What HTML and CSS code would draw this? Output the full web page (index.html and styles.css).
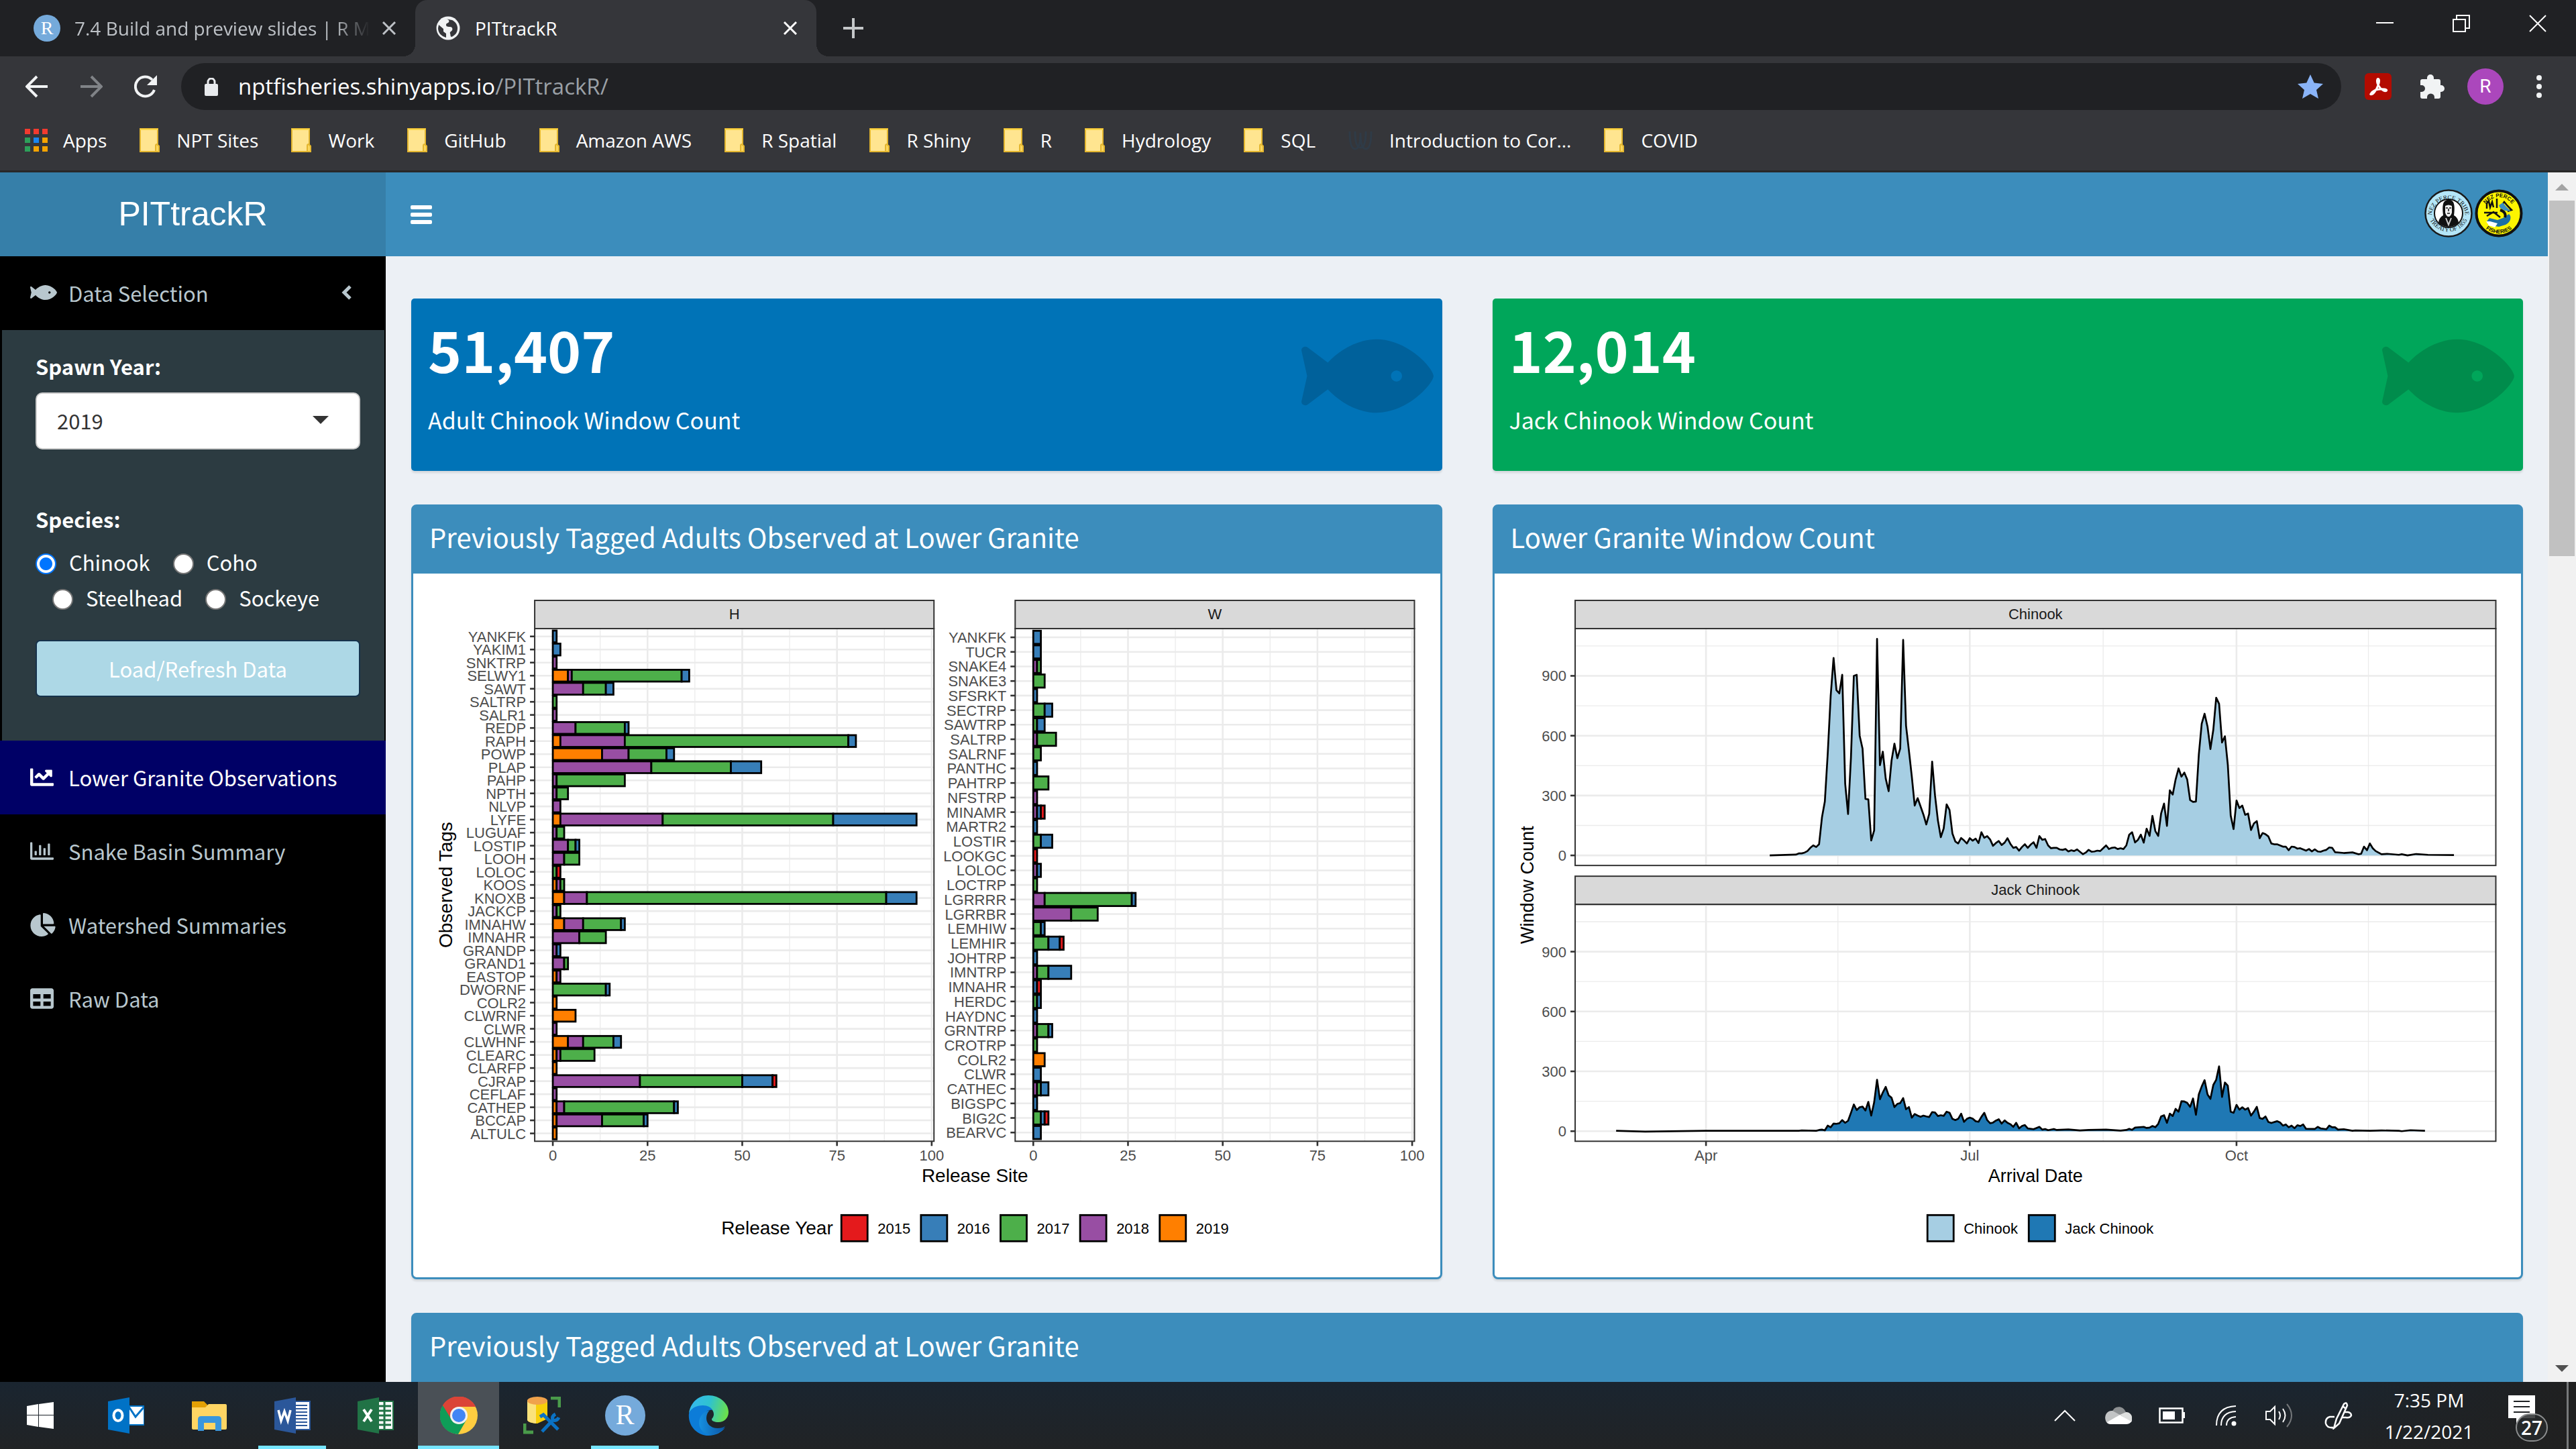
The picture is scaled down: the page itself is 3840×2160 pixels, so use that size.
FILE: index.html
```html
<!DOCTYPE html>
<html lang="en">
<head>
<meta charset="utf-8">
<title>PITtrackR</title>
<link rel="stylesheet" href="styles.css">
</head>
<body>
<svg class="defs" aria-hidden="true">
  <symbol id="i-fish" viewBox="0 0 576 512"><path d="M327.1 96c-89.97 0-168.54 54.77-212.27 101.63L27.5 131.58c-12.13-9.18-30.24.6-27.14 14.66L24.54 256 .35 365.77c-3.1 14.06 15.01 23.83 27.14 14.66l87.33-66.05C158.55 361.23 237.13 416 327.1 416 464.56 416 576 288 576 256S464.56 96 327.1 96zm87.43 184c-13.25 0-24-10.75-24-24 0-13.26 10.75-24 24-24 13.26 0 24 10.74 24 24 0 13.25-10.75 24-24 24z"/></symbol>
  <symbol id="i-folder" viewBox="0 0 30 36"><path d="M1 1h26v24l2 2v8H1z" fill="#ffe590" stroke="#e3b62f" stroke-width="2"/><path d="M1 2h26" stroke="#ffd84c" stroke-width="2"/><path d="M24 35V26q0-2 2-2l3 3v8z" fill="#fbd75e" stroke="#e3b62f" stroke-width="2"/></symbol>
  <symbol id="i-x" viewBox="0 0 20 20"><path d="M1 1l18 18M19 1L1 19" fill="none" stroke="currentColor" stroke-width="3"/></symbol>
</svg>

<header class="browser">
  <div class="tabstrip">
    <div class="tab">
      <span class="rmark fav">R</span>
      <span class="tab-title faded">7.4 Build and preview slides | R M</span>
      <button class="tab-close" aria-label="Close tab"><svg><use href="#i-x"/></svg></button>
    </div>
    <div class="tab active">
      <svg class="globe" viewBox="0 0 36 36"><circle cx="18" cy="18" r="17.500" fill="#f1f3f4"/><path d="M4 13l7 6v4l4 3v6C8 30 3 25 3 18zM16 5c3 0 4 2 3 4s-4 1-4 4 3 3 6 3 4 3 3 5-4 2-3 5 0 4 2 5c5-2 9-6 9-13 0-6-4-10-8-12-2 0-5-2-8-1z" fill="#35363a"/></svg>
      <span class="tab-title">PITtrackR</span>
      <button class="tab-close" aria-label="Close tab"><svg><use href="#i-x"/></svg></button>
    </div>
    <button class="new-tab" aria-label="New tab"><svg viewBox="0 0 30 30"><path d="M15 0v30M0 15h30" stroke="#c4c7c9" stroke-width="4"/></svg></button>
    <div class="win-controls">
      <button aria-label="Minimize"><svg viewBox="0 0 26 26"><path d="M0 12h26" stroke="#fff" stroke-width="2"/></svg></button>
      <button aria-label="Restore"><svg viewBox="0 0 26 26"><path d="M1 7h18v18H1zM6 7V1h19v19h-6" fill="none" stroke="#fff" stroke-width="2"/></svg></button>
      <button aria-label="Close"><svg viewBox="0 0 26 26"><path d="M1 1l24 24M25 1L1 25" stroke="#fff" stroke-width="2"/></svg></button>
    </div>
  </div>
  <div class="toolbar">
    <button aria-label="Back"><svg class="nav" viewBox="0 0 34 34"><path d="M33 17H3M17 2L2 17l15 15" fill="none" stroke="#f1f3f4" stroke-width="4"/></svg></button>
    <button aria-label="Forward"><svg class="nav" viewBox="0 0 34 34"><path d="M1 17h30M17 2l15 15-15 15" fill="none" stroke="#808387" stroke-width="4"/></svg></button>
    <button aria-label="Reload"><svg class="nav" viewBox="0 0 34 34"><path d="M30 22A14.500 14.500 0 1 1 27 7" fill="none" stroke="#f1f3f4" stroke-width="4"/><path d="M34 0v15H19z" fill="#f1f3f4"/></svg></button>
    <div class="omnibox">
      <svg class="lock" viewBox="0 0 20 27"><rect y="9" width="20" height="18" rx="2" fill="#e8eaed"/><path d="M5 10V6a5 5 0 0 1 10 0v4" fill="none" stroke="#e8eaed" stroke-width="3"/></svg>
      <div class="url" role="textbox" aria-label="Address" contenteditable="true" spellcheck="false">nptfisheries.shinyapps.io<span>/PITtrackR/</span></div>
      <button class="star" aria-label="Bookmark this page"><svg viewBox="0 0 38 36"><path d="M19 0l5.700 12.500L38 14l-10 9 3 13-12-7-12 7 3-13L0 14l13.300-1.500z" fill="#8ab4f8"/></svg></button>
    </div>
    <div class="extensions">
      <button aria-label="Acrobat"><svg width="40" height="40" viewBox="0 0 40 40"><rect width="40" height="40" rx="6" fill="#b30b00"/><path d="M9 31c3-5 10-8 21-7 5 1 2 4-2 2-7-4-11-12-9-17 2-2 4 2 1 9-2 5-5 11-8 13-2 1-4 1-3 0z" fill="none" stroke="#fff" stroke-width="3"/></svg></button>
      <button aria-label="Extensions"><svg width="37" height="37" viewBox="0 0 37 37"><path d="M11 7V5a5 5 0 0 1 10 0v2h7q3 0 3 3v6h1a5 5 0 0 1 0 10h-1v7q0 3-3 3h-6v-2a5 5 0 0 0-11 0v2H4q-3 0-3-3v-7h2a5 5 0 0 0 0-10H1v-6q0-3 3-3z" fill="#f1f3f4"/></svg></button>
      <button aria-label="Profile"><span class="avatar">R</span></button>
      <button aria-label="Menu"><svg width="8" height="34" viewBox="0 0 8 34"><circle cx="4" cy="4" r="4" fill="#f1f3f4"/><circle cx="4" cy="17" r="4" fill="#f1f3f4"/><circle cx="4" cy="30" r="4" fill="#f1f3f4"/></svg></button>
    </div>
  </div>
  <nav class="bookmarks">
    <a href="#" class="apps"><svg width="34" height="34" viewBox="0 0 34 34"><path d="M0 0h8v8H0zM13 0h8v8h-8zM26 0h8v8h-8z" fill="#f23a2f"/><path d="M0 13h8v8H0zM0 26h8v8H0z" fill="#2da05a"/><path d="M13 13h8v8h-8z" fill="#1a86f0"/><path d="M26 13h8v8h-8zM13 26h8v8h-8zM26 26h8v8h-8z" fill="#f5a300"/></svg>Apps</a>
    <a href="#"><svg class="folder"><use href="#i-folder"/></svg>NPT Sites</a>
    <a href="#"><svg class="folder"><use href="#i-folder"/></svg>Work</a>
    <a href="#"><svg class="folder"><use href="#i-folder"/></svg>GitHub</a>
    <a href="#"><svg class="folder"><use href="#i-folder"/></svg>Amazon AWS</a>
    <a href="#"><svg class="folder"><use href="#i-folder"/></svg>R Spatial</a>
    <a href="#"><svg class="folder"><use href="#i-folder"/></svg>R Shiny</a>
    <a href="#"><svg class="folder"><use href="#i-folder"/></svg>R</a>
    <a href="#"><svg class="folder"><use href="#i-folder"/></svg>Hydrology</a>
    <a href="#"><svg class="folder"><use href="#i-folder"/></svg>SQL</a>
    <a href="#"><svg width="36" height="30" viewBox="0 0 36 30"><path d="M2 2q0 26 8 26t8-24q0 24 8 24t8-26M10 2q0 24 8 24t8-24" fill="none" stroke="#2f3b47" stroke-width="3"/></svg>Introduction to Cor...</a>
    <a href="#"><svg class="folder"><use href="#i-folder"/></svg>COVID</a>
  </nav>
</header>

<div class="viewport">
  <aside class="sidebar">
    <a class="brand" href="#">PITtrackR</a>
    <a class="item" href="#"><span class="ico"><svg width="40" height="36"><use href="#i-fish"/></svg></span>Data Selection
      <svg class="angle" viewBox="0 0 16 22"><path d="M13 2L4 11l9 9" fill="none" stroke="currentColor" stroke-width="5"/></svg></a>
    <form class="filters" onsubmit="return false">
      <label class="field" for="year">Spawn Year:</label>
      <div class="select"><select id="year"><option>2019</option></select></div>
      <fieldset>
        <legend class="field">Species:</legend>
        <div class="radios">
          <label><input type="radio" name="species" checked>Chinook</label>
          <label><input type="radio" name="species">Coho</label>
        </div>
        <div class="radios indent">
          <label><input type="radio" name="species">Steelhead</label>
          <label><input type="radio" name="species">Sockeye</label>
        </div>
      </fieldset>
      <button class="load">Load/Refresh Data</button>
    </form>
    <nav>
      <a class="item current" href="#"><span class="ico"><svg width="35" height="35" viewBox="0 0 512 512"><path d="M496 384H64V80c0-8.840-7.160-16-16-16H16C7.160 64 0 71.160 0 80v336c0 17.670 14.330 32 32 32h464c8.840 0 16-7.160 16-16v-32c0-8.840-7.160-16-16-16zM464 96H345.940c-21.380 0-32.090 25.850-16.970 40.970l32.400 32.400L288 242.750l-73.370-73.370c-12.500-12.500-32.760-12.500-45.250 0l-68.690 68.690c-6.250 6.250-6.250 16.380 0 22.630l22.620 22.620c6.250 6.250 16.380 6.250 22.630 0L192 237.250l73.370 73.370c12.500 12.500 32.760 12.500 45.250 0l96-96 32.400 32.400c15.120 15.120 40.970 4.410 40.970-16.970V112c.01-8.840-7.150-16-15.990-16z"/></svg></span>Lower Granite Observations</a>
      <a class="item" href="#"><span class="ico"><svg width="35" height="35" viewBox="0 0 512 512"><path d="M396.800 352h22.400c6.400 0 12.800-6.400 12.800-12.800V108.800c0-6.400-6.400-12.800-12.800-12.800h-22.400c-6.400 0-12.800 6.400-12.800 12.800v230.400c0 6.400 6.400 12.800 12.800 12.800zm-192 0h22.400c6.400 0 12.800-6.400 12.800-12.800V140.800c0-6.400-6.400-12.800-12.800-12.800h-22.400c-6.400 0-12.800 6.400-12.800 12.800v198.400c0 6.400 6.400 12.800 12.800 12.800zm96 0h22.400c6.400 0 12.800-6.400 12.800-12.800V204.800c0-6.400-6.400-12.800-12.800-12.800h-22.400c-6.400 0-12.800 6.400-12.800 12.800v134.400c0 6.400 6.400 12.800 12.800 12.800zM496 400H48V80c0-8.840-7.160-16-16-16H16C7.160 64 0 71.160 0 80v336c0 17.670 14.330 32 32 32h464c8.840 0 16-7.160 16-16v-16c0-8.840-7.160-16-16-16zm-387.200-48h22.400c6.400 0 12.800-6.400 12.800-12.800v-70.400c0-6.400-6.400-12.800-12.800-12.800h-22.400c-6.400 0-12.800 6.400-12.800 12.800v70.400c0 6.400 6.400 12.800 12.800 12.800z"/></svg></span>Snake Basin Summary</a>
      <a class="item" href="#"><span class="ico"><svg width="38" height="35" viewBox="0 0 544 512"><path d="M527.790 288H290.500l158.030 158.030c6.040 6.040 15.980 6.530 22.190.68 38.700-36.460 65.320-85.610 73.130-140.860 1.340-9.460-6.510-17.850-16.060-17.850zm-15.830-64.800C503.720 103.740 408.260 8.280 288.800.04 279.680-.59 272 7.100 272 16.240V240h223.770c9.140 0 16.820-7.680 16.190-16.800zM224 288V50.710c0-9.550-8.390-17.400-17.840-16.060C86.990 51.490-4.100 155.600.14 280.370 4.500 408.510 114.830 513.590 243.030 511.980c50.400-.63 96.970-16.870 135.260-44.030 7.900-5.600 8.420-17.230 1.570-24.080L224 288z"/></svg></span>Watershed Summaries</a>
      <a class="item" href="#"><span class="ico"><svg width="35" height="35" viewBox="0 0 512 512"><path d="M464 32H48C21.490 32 0 53.490 0 80v352c0 26.510 21.490 48 48 48h416c26.510 0 48-21.490 48-48V80c0-26.510-21.490-48-48-48zM224 416H64v-96h160v96zm0-160H64v-96h160v96zm224 160H288v-96h160v96zm0-160H288v-96h160v96z"/></svg></span>Raw Data</a>
    </nav>
  </aside>

  <div class="page">
    <div class="navbar">
      <button class="burger" aria-label="Toggle navigation"><span></span><span></span><span></span></button>
      <div class="logos">
        <svg width="74" height="76" viewBox="0 0 74 76">
          <circle cx="37" cy="36" r="34.500" fill="#b4e6f8" stroke="#1a1a1a" stroke-width="2.500"/>
          <circle cx="37" cy="36" r="21" fill="#fff" stroke="#111" stroke-width="2"/>
          <path d="M22 50c1-7 4-9 7-11-1-8-1-13 0-17 2-8 14-9 16 0 1 4 1 9 0 17 3 2 6 4 7 11-4 4-9 6-15 6s-11-2-15-6z" fill="#111"/>
          <path d="M32 25q5-3 10 0v10q-2 6-5 6t-5-6z" fill="#f0f0f0"/><path d="M33 28h3m2 0h3m-6 8h4M37 29v4" stroke="#111" stroke-width="1.500"/><path d="M33 43l4 10 4-10" fill="none" stroke="#ccc" stroke-width="2"/>
          <path id="arc1" d="M12 40A25 25 0 1 1 62 40" fill="none"/><path id="arc2" d="M7 40A31 31 0 0 0 67 40" fill="none"/>
          <text font-family="Liberation Serif, serif" font-size="9" fill="#111"><textPath href="#arc1" startOffset="50%" text-anchor="middle">NEZ PERCE TRIBE</textPath></text>
          <text font-family="Liberation Serif, serif" font-size="9" fill="#111"><textPath href="#arc2" startOffset="50%" text-anchor="middle">TREATY OF 1855</textPath></text>
        </svg>
        <svg width="72" height="76" viewBox="0 0 72 76">
          <circle cx="36" cy="36" r="33.500" fill="#fdf500" stroke="#111" stroke-width="4"/>
          <path id="arc3" d="M12 36A24 24 0 0 1 60 36" fill="none"/><path id="arc4" d="M6 36A30 30 0 0 0 66 36" fill="none"/>
          <text font-family="Liberation Sans, sans-serif" font-weight="700" font-size="8" fill="#111"><textPath href="#arc3" startOffset="50%" text-anchor="middle">NEZ PERCE</textPath></text>
          <text font-family="Liberation Sans, sans-serif" font-weight="700" font-size="8" fill="#111"><textPath href="#arc4" startOffset="50%" text-anchor="middle">FISHERIES</textPath></text>
          <path d="M33 14v14M38 27l6-8 5 6 6 6-6 2M18 29v-8l3-3 2 9 3-8 2 8M14 35h20M18 40l10-6 10 8" fill="none" stroke="#111" stroke-width="2.500"/>
          <path d="M36 24l6-4 4 5 8 8-9-1-7-4z" fill="#3b8fc0"/><path d="M18 48l4-5 12 3 8-3 9-6c5 4 2 13-5 16l-10 3-12-2z" fill="#1c6fa5"/><path d="M17 48l6 0 11 3-4 6-9-3z" fill="#fff"/><path d="M38 31c6 2 9 6 7 11" fill="none" stroke="#111" stroke-width="4"/>
        </svg>
      </div>
    </div>
    <main class="content">
      <section class="value blue"><h3>51,407</h3><p>Adult Chinook Window Count</p><svg class="fish"><use href="#i-fish"/></svg></section>
      <section class="value green"><h3>12,014</h3><p>Jack Chinook Window Count</p><svg class="fish"><use href="#i-fish"/></svg></section>
      <section class="box"><h2>Previously Tagged Adults Observed at Lower Granite</h2><svg class="plot" id="tags" viewBox="0 0 1530 1049" role="img" aria-label="Observed tags by release site"></svg></section>
      <section class="box"><h2>Lower Granite Window Count</h2><svg class="plot" id="window" viewBox="0 0 1530 1049" role="img" aria-label="Window count by arrival date"></svg></section>
      <section class="box wide"><h2>Previously Tagged Adults Observed at Lower Granite</h2></section>
    </main>
  </div>
  <div class="scrollbar" aria-hidden="true"><i class="up"></i><b></b><i class="down"></i></div>
</div>

<footer class="taskbar">
  <button class="start" aria-label="Start"><svg width="40" height="40" viewBox="0 0 40 40"><path d="M0 6l17-3v16H0zM18 3l22-3v19H18zM0 20h17v17L0 34zM18 20h22v20l-22-3z" fill="#fff"/></svg></button>
  <button aria-label="Outlook"><svg width="54" height="54" viewBox="0 0 54 54"><path d="M30 13h24v28H30z" fill="#fff" stroke="#0072c6" stroke-width="2"/><path d="M31 14l10 15 13-15" fill="none" stroke="#0072c6" stroke-width="3"/><path d="M0 6l32-6v54L0 48z" fill="#0072c6"/><ellipse cx="15" cy="27" rx="6.500" ry="8" fill="none" stroke="#fff" stroke-width="4"/></svg></button>
  <button aria-label="File Explorer"><svg width="54" height="46" viewBox="0 0 54 46"><path d="M1 2h18l6 6h28v9H1z" fill="#e3a005"/><path d="M1 11h20l5-5h25q2 0 2 2v34q0 2-2 2H3q-2 0-2-2z" fill="#ffd563"/><path d="M10 46V29q0-5 5-5h25q5 0 5 5v17h-9V34H19v12z" fill="#3a96dd"/></svg></button>
  <button class="open" aria-label="Word"><svg width="54" height="54" viewBox="0 0 54 54"><path d="M30 6h23v42H30z" fill="#fff" stroke="#2b579a" stroke-width="2"/><path d="M32 12h17M32 17h17M32 22h17M32 27h17M32 32h17M32 37h17M32 42h17" stroke="#2b579a" stroke-width="2"/><path d="M0 6l32-6v54L0 48z" fill="#2b579a"/><path d="M6 19l4 16 5-14 5 14 4-16" fill="none" stroke="#fff" stroke-width="3.500"/></svg></button>
  <button aria-label="Excel"><svg width="54" height="54" viewBox="0 0 54 54"><path d="M30 6h23v42H30z" fill="#fff" stroke="#217346" stroke-width="2"/><path d="M40 7v40M32 13h18M32 20h18M32 27h18M32 34h18M32 41h18" stroke="#217346" stroke-width="3"/><path d="M0 6l32-6v54L0 48z" fill="#217346"/><path d="M9 18l12 18M21 18L9 36" fill="none" stroke="#fff" stroke-width="4"/></svg></button>
  <button class="open focused" aria-label="Chrome"><svg width="56" height="56" viewBox="0 0 56 56"><circle cx="28" cy="28" r="28" fill="#ffcd40"/><path d="M28 28L4 13A28 28 0 0 1 53 15H28z" fill="#db4437"/><path d="M4 13A28 28 0 0 0 27 56L39 35 28 28z" fill="#0f9d58"/><path d="M4 13l13 21 11-6V15h25A28 28 0 0 0 4 13z" fill="#db4437"/><circle cx="28" cy="28" r="13" fill="#f1f1f1"/><circle cx="28" cy="28" r="10" fill="#4285f4"/></svg></button>
  <button aria-label="SSMS"><svg width="56" height="56" viewBox="0 0 56 56"><path d="M6 5v30a15 6 0 0 0 15 5l15-7V5z" fill="#f8cf0a"/><path d="M6 5v30a15 6 0 0 0 13 5V5z" fill="#fbe27a"/><ellipse cx="21" cy="6" rx="15" ry="6" fill="#f0a24b"/><path d="M41 2h13v14M2 40v13h13" fill="none" stroke="#4a9b4a" stroke-width="5"/><path d="M25 30l5-3 22 22M28 52l16-17q-2-6 4-9M44 35q6 2 9-4" fill="none" stroke="#0a72c4" stroke-width="5"/></svg></button>
  <button class="open" aria-label="RStudio"><span class="rmark large">R</span></button>
  <button aria-label="Edge"><svg width="60" height="60" viewBox="0 0 60 60"><defs><linearGradient id="eg" x1="0" x2="1" y1=".3" y2=".5"><stop offset="0" stop-color="#35b8f0"/><stop offset=".5" stop-color="#2fc2cf"/><stop offset="1" stop-color="#6be04a"/></linearGradient><linearGradient id="eb" x1="0" x2="1"><stop offset="0" stop-color="#1690e0"/><stop offset="1" stop-color="#0c55a5"/></linearGradient></defs><path d="M1 27C3 11 15 0 30 0c17 0 30 12 30 25 0 9-7 15-15 15-6 0-10-2-10-4s3-3 3-8c0-7-7-12-15-12C12 16 4 20 1 27z" fill="url(#eg)"/><path d="M1 27c3-8 11-12 21-12 7 0 12 3 14 7-8-2-14 5-14 13 0 11 10 18 20 18 6 0 10-2 13-5-5 7-14 12-25 12C13 60-1 45 1 27z" fill="#0c7cd8"/><path d="M32 22c-7 1-16 8-16 19 0 10 8 18 19 18 8-1 16-6 20-13-3 2-6 3-11 3-12 0-17-8-17-15 0-5 2-9 5-12z" fill="url(#eb)"/></svg></button>
  <div class="tray">
    <button aria-label="Hidden icons"><svg width="32" height="18" viewBox="0 0 32 18"><path d="M1 17L16 2l15 15" fill="none" stroke="#fff" stroke-width="2"/></svg></button>
    <button aria-label="OneDrive"><svg width="40" height="28" viewBox="0 0 40 28"><path d="M10 10C12 0 26-3 31 9L20 16z" fill="#8e9193"/><path d="M2 24C-3 15 3 6 11 7l11 6L4 26z" fill="#c2c4c5"/><path d="M22 13l9-4c7-1 12 8 8 15z" fill="#dedfdf"/><path d="M3 24l19-11 17 10q-2 4-8 4H8q-4 0-5-3z" fill="#fff"/></svg></button>
    <button aria-label="Battery"><svg width="40" height="24" viewBox="0 0 40 24"><path d="M1.500 1.500h34v21h-34z" fill="none" stroke="#fff" stroke-width="2.500"/><path d="M6 6h18v12H6zM36 7h3v9h-3z" fill="#fff"/></svg></button>
    <button aria-label="Network"><svg width="32" height="32" viewBox="0 0 32 32"><path d="M2 31Q2 3 31 2M9 31Q9 11 31 10M17 31q0-12 14-13" fill="none" stroke="#fff" stroke-width="2"/><circle cx="28" cy="28" r="3.500" fill="#fff"/></svg></button>
    <button aria-label="Volume"><svg width="42" height="38" viewBox="0 0 42 38"><path d="M1 13h6l7-7v26l-7-7H1z" fill="none" stroke="#fff" stroke-width="2"/><path d="M20 13q4 6 0 12M26 9q7 10 0 20" fill="none" stroke="#fff" stroke-width="2"/><path d="M32 2q14 17 0 34" fill="none" stroke="#74777a" stroke-width="2"/></svg></button>
    <button class="ink" aria-label="Ink workspace"><svg width="42" height="42" viewBox="0 0 42 42"><path d="M14 40l4-14L29 4q4-4 5 2L22 33zM27 7l5 4M15 23H8q-7 2-6 10 2 7 11 6M30 16h5q5 1 5 5-2 4-8 3h-6" fill="none" stroke="#fff" stroke-width="2.500"/></svg></button>
    <div class="clock"><time>7:35 PM</time><time>1/22/2021</time></div>
    <button class="notify" aria-label="Notifications"><svg width="64" height="60" viewBox="0 0 64 60"><path d="M0 0h40v34H20l-8 8v-8H0z" fill="#fff"/><path d="M8 9h24M8 17h24M8 25h24" stroke="#1f2224" stroke-width="2"/></svg><span>27</span></button>
    <button class="desktop" aria-label="Show desktop"></button>
  </div>
</footer>
<script src="charts.js"></script>
</body>
</html>
```
FILE: styles.css
```css
* { box-sizing: border-box; }
html, body { height: 100%; }
body {
  margin: 0;
  display: flex;
  flex-direction: column;
  overflow: hidden;
  font-family: "Noto Sans CJK JP", "Source Sans Pro", sans-serif;
  font-size: 31px;
  color: #fff;
  background: #ecf0f5;
}
button {
  margin: 0; padding: 0; border: 0;
  background: none; color: inherit; font: inherit;
  display: flex; align-items: center; justify-content: center;
}
a { color: inherit; text-decoration: none; }
h2, h3, p, fieldset, legend { margin: 0; padding: 0; border: 0; font-weight: 400; }
svg { display: block; flex: none; }
.defs { position: absolute; width: 0; height: 0; }

/* browser frame */
.browser {
  flex: none;
  background: #35363a;
  border-bottom: 3px solid #282828;
  font-family: "Open Sans", "Segoe UI", sans-serif;
  font-size: 28px;
}
.tabstrip { display: flex; height: 84px; background: #202124; }
.tab { display: flex; align-items: center; width: 619px; padding: 0 29px 0 50px; color: #bdc1c6; }
.tab.active {
  width: 598px; padding-left: 31px;
  background: #35363a; color: #fff;
  border-radius: 18px 18px 0 0;
  position: relative;
}
.tab.active::before, .tab.active::after {
  content: ""; position: absolute; bottom: 0; width: 18px; height: 18px;
}
.tab.active::before { left: -18px; background: radial-gradient(circle at 0 0, transparent 18px, #35363a 18px); }
.tab.active::after { right: -18px; background: radial-gradient(circle at 100% 0, transparent 18px, #35363a 18px); }
.rmark {
  flex: none; border-radius: 50%; background: #75aadb; color: #fff; text-align: center;
  font-family: "Liberation Serif", "Times New Roman", serif;
}
.rmark.fav { width: 40px; height: 40px; margin-right: 21px; font-size: 28px; line-height: 40px; }
.rmark.large { width: 60px; height: 60px; font-size: 42px; line-height: 58px; }
.globe { width: 36px; height: 36px; margin-right: 22px; }
.tab-title { flex: 1; white-space: nowrap; overflow: hidden; line-height: 40px; }
.faded { mask-image: linear-gradient(90deg, #000 88%, transparent); margin-right: 19px; }
.tab-close svg { width: 20px; height: 20px; }
.new-tab { width: 110px; }
.new-tab svg { width: 30px; height: 30px; }
.win-controls { display: flex; margin-left: auto; }
.win-controls button { width: 114px; height: 70px; }
.win-controls svg { width: 26px; height: 26px; }
.toolbar { display: flex; align-items: center; height: 90px; padding: 0 15px 0 14px; }
.toolbar > button { width: 81px; height: 70px; }
.nav { width: 34px; height: 34px; }
.omnibox {
  flex: 1; height: 70px; margin: 0 15px 0 13px; padding: 0 27px 0 35px;
  display: flex; align-items: center;
  background: #202124; border-radius: 35px;
}
.lock { width: 20px; height: 27px; margin-right: 30px; }
.url { flex: 1; font-size: 33px; line-height: 50px; outline: 0; }
.url span { color: #9aa0a6; }
.star svg { width: 38px; height: 36px; }
.extensions { display: flex; }
.extensions button { width: 80px; height: 70px; }
.avatar {
  width: 54px; height: 54px; line-height: 54px; border-radius: 50%;
  background: #ab47bc; font-family: Roboto, sans-serif; text-align: center;
}
.bookmarks { display: flex; align-items: center; gap: 49px; height: 80px; padding: 0 37px 11px; }
.bookmarks a { display: flex; align-items: center; gap: 25px; white-space: nowrap; }
.bookmarks .apps { gap: 23px; }
.folder { width: 30px; height: 36px; }

/* dashboard */
.viewport { flex: 1; min-height: 0; display: flex; }
.sidebar { width: 575px; flex: none; background: #000; overflow: hidden; }
.brand {
  display: block; height: 125px; background: #367fa9;
  font: 50px/125px "Liberation Sans", Arial, sans-serif; text-align: center;
}
.item { display: flex; align-items: center; height: 110px; padding: 0 50px 2px 45px; color: #b8c7ce; white-space: nowrap; }
.item svg { fill: currentColor; }
.ico { width: 57px; flex: none; }
.angle { width: 16px; height: 22px; margin-left: auto; }
.item .angle { fill: none; }
.item.current { background: #000066; color: #fff; }
.filters { margin: 0 2px 0 3px; padding: 29px 36px 65px 50px; background: #2c3b41; }
.field { display: block; font-weight: 700; line-height: 50px; }
.select { position: relative; margin: 14px 0 79px; }
.select select {
  appearance: none; display: block; width: 100%; height: 85px; padding: 0 30px 2px;
  border: 2px solid #ccc; border-radius: 10px; background: #fff; color: #333; font: inherit;
}
.select::after {
  content: ""; position: absolute; right: 47px; top: 35px;
  border: 12px solid transparent; border-top-color: #333; border-bottom: 0;
}
.radios { display: flex; gap: 34px; height: 53px; }
.field + .radios { margin-top: 12px; }
.radios.indent { padding-left: 25px; }
.radios label { display: flex; align-items: center; gap: 19px; line-height: 53px; }
.radios input {
  appearance: none; width: 31px; height: 31px; margin: 5px 0 0; flex: none;
  border-radius: 50%; border: 2px solid #767676; background: #fff;
}
.radios input:checked { border: 2px solid #0075ff; background: radial-gradient(circle, #0075ff 9px, #fff 10px); }
.load {
  width: 100%; height: 85px; margin-top: 37px;
  background: #add8e6; border: 2px solid #16324c; border-radius: 7px;
}
.page { flex: 1; min-width: 0; overflow: hidden; }
.navbar { display: flex; align-items: center; justify-content: space-between; height: 125px; padding: 0 37px; background: #3c8dbc; }
.burger { flex-direction: column; gap: 5px; }
.burger span { width: 32px; height: 6px; border-radius: 2px; background: #fff; }
.logos { display: flex; gap: 2px; }
.content { display: grid; grid-template-columns: 1fr 1fr; column-gap: 75px; row-gap: 50px; padding: 63px 37px 0 38px; }
.value {
  position: relative; padding: 22px 25px 51px; border-radius: 5px;
  box-shadow: 0 3px 3px rgba(0, 0, 0, .1);
}
.blue { background: #0073b7; }
.green { background: #00a65a; }
.value h3 { font-size: 85px; font-weight: 700; line-height: 104px; margin-bottom: 30px; }
.value p { font-size: 34px; line-height: 50px; }
.fish { position: absolute; right: 13px; top: 28px; width: 197px; height: 175px; opacity: .15; fill: #000; }
.box {
  background: #fff; border: 3px solid #3c8dbc; border-radius: 8px;
  box-shadow: 0 3px 3px rgba(0, 0, 0, .1);
}
.box.wide { grid-column: 1 / -1; height: 600px; }
.box h2 { padding: 15px 24px 25px; background: #3c8dbc; font-size: 40px; line-height: 60px; }
.plot { width: 100%; height: auto; font-family: "Liberation Sans", Arial, sans-serif; }
.scrollbar { width: 42px; flex: none; display: flex; flex-direction: column; align-items: center; background: #f1f1f1; }
.scrollbar b { width: 38px; height: 530px; background: #c1c1c1; }
.scrollbar i { border: 10px solid transparent; }
.scrollbar .up { margin-bottom: 15px; margin-top: 7px; border-bottom-color: #a3a3a3; }
.scrollbar .down { margin-top: auto; margin-bottom: 5px; border-top-color: #505050; }

/* taskbar */
.taskbar {
  flex: none; display: flex; gap: 3px; height: 100px;
  background: linear-gradient(90deg, rgba(32, 32, 32, 0) 90%, #202020), linear-gradient(#1a2530, #212325);
  font-family: "Open Sans", "Segoe UI", sans-serif; font-size: 28px;
}
.taskbar > button { width: 121px; }
.taskbar .start { width: 120px; margin-right: 4px; }
.open { background: linear-gradient(#76e5ff, #76e5ff) center bottom / 101px 5px no-repeat; }
.focused { background-size: 121px 5px; background-color: #4a5056; }
.tray { display: flex; margin-left: auto; }
.tray button { width: 80px; }
.tray .ink { margin-left: 8px; }
.tray .clock {
  width: 190px; padding-top: 2px; display: flex; flex-direction: column; justify-content: center;
  text-align: center; line-height: 47px;
}
.tray .notify { width: 110px; position: relative; }
.notify span {
  position: absolute; left: 34px; top: 47px; width: 48px; height: 42px; line-height: 38px;
  border: 2px solid #8b8d8e; border-radius: 21px; background: rgba(40, 42, 44, .85); font-weight: 600;
}
.tray .desktop { width: 14px; border-left: 3px solid #77797a; }
```
FILE: charts.js
```js
const NS = 'http://www.w3.org/2000/svg';
const INK = '#333', GREY = '#4d4d4d', GRID = '#ebebeb';

function painter(svg) {
  const add = (tag, attrs, text) => {
    const el = document.createElementNS(NS, tag);
    for (const k in attrs) el.setAttribute(k, attrs[k]);
    if (text !== undefined) el.textContent = text;
    svg.appendChild(el);
    return el;
  };
  return {
    rect: (x, y, w, h, fill, stroke, sw) => add('rect', { x, y, width: w, height: h, fill, stroke: stroke || 'none', 'stroke-width': sw || 0 }),
    line: (x1, y1, x2, y2, stroke, sw) => add('line', { x1, y1, x2, y2, stroke, 'stroke-width': sw }),
    text: (x, y, s, size, fill, anchor, extra) => add('text', Object.assign({ x, y, 'font-size': size, fill, 'text-anchor': anchor }, extra), s),
    path: (d, fill, stroke, sw) => add('path', { d, fill, stroke, 'stroke-width': sw, 'stroke-linejoin': 'round' }),
    strip(x, y, w, label) {
      this.rect(x, y, w, 42, '#d9d9d9', INK, 2);
      this.text(x + w / 2, y + 28, label, 22, '#1a1a1a', 'middle');
    }
  };
}

/* stacked bars: counts by release year, 2019 first */
const YEARS = { o: '#ff7f00', p: '#984ea3', g: '#4daf4a', b: '#377eb8', r: '#e41a1c' };
const H = 'YANKFK b1,YAKIM1 b2,SNKTRP p1,SELWY1 o4 p1 g29 b2,SAWT p8 g6 b2,SALTRP g1,SALR1 p1,REDP p6 g13 b1,RAPH o2 p17 g59 b2,POWP o13 p7 g10 b2,PLAP p26 g21 b8,PAHP p1 g18,NPTH p1 g3,NLVP p2,LYFE o2 p27 g45 b22,LUGUAF p1 g2,LOSTIP p4 g2 b1,LOOH p3 g4,LOLOC g1 r1,KOOS o1 p1 g1,KNOXB o3 p6 g79 b8,JACKCP p1 g1,IMNAHW o3 p5 g10 b1,IMNAHR p7 g7,GRANDP p1 b1,GRAND1 p3 g1,EASTOP o1 p1,DWORNF g14 b1,COLR2 o1,CLWRNF o6,CLWR p1,CLWHNF o4 p4 g8 b2,CLEARC o1 p1 g9,CLARFP o1,CJRAP p23 g27 b8 r1,CEFLAF p1,CATHEP o1 p2 g29 b1,BCCAP o1 p12 g11 b1,ALTULC o1';
const W = 'YANKFK b2,TUCR b2,SNAKE4 p1 g1,SNAKE3 g3,SFSRKT b1,SECTRP g3 b2,SAWTRP g1 b2,SALTRP p1 g5,SALRNF g2,PANTHC b1,PAHTRP g4,NFSTRP p1,MINAMR p1 b1 r1,MARTR2 b1,LOSTIR g2 b3,LOOKGC r1,LOLOC p1 b1,LOCTRP g1,LGRRRR p3 g23 b1,LGRRBR p10 g7,LEMHIW g2 b1,LEMHIR g4 b3 r1,JOHTRP b1,IMNTRP p1 g3 b6,IMNAHR b1 r1,HERDC g1 b1,HAYDNC b1,GRNTRP p1 g3 b1,CROTRP g1,COLR2 o3,CLWR b2,CATHEC p1 g1 b2,BIGSPC b1,BIG2C g2 b1 r1,BEARVC b2';

function barPanel(p, data, left, label) {
  const rows = data.split(',');
  const top = 82, height = 764, width = 595, zero = left + 27, unit = 5.646;
  const step = height / (rows.length + 0.2);
  p.strip(left, 40, width, label);
  for (let v = 12.5; v < 100; v += 25) p.line(zero + v * unit, top, zero + v * unit, top + height, GRID, 1.3);
  for (let v = 0; v <= 100; v += 25) p.line(zero + v * unit, top, zero + v * unit, top + height, GRID, 2.6);
  rows.forEach((_, i) => {
    const y = top + step * (i + 0.6);
    p.line(left, y, left + width, y, GRID, 2.6);
  });
  rows.forEach((row, i) => {
    const [name, ...parts] = row.split(' ');
    const y = top + step * (i + 0.6);
    let x = zero;
    parts.forEach(part => {
      const w = part.slice(1) * unit;
      p.rect(x, y - step * 0.45, w, step * 0.9, YEARS[part[0]], '#000', 2.8);
      x += w;
    });
    p.line(left - 7, y, left, y, INK, 2.6);
    p.text(left - 13, y + 8, name, 22, GREY, 'end');
  });
  p.rect(left, top, width, height, 'none', INK, 2);
  for (let v = 0; v <= 100; v += 25) {
    p.line(zero + v * unit, top + height, zero + v * unit, top + height + 7, INK, 2.6);
    p.text(zero + v * unit, 875, v, 22, GREY, 'middle');
  }
}

const tags = painter(document.getElementById('tags'));
barPanel(tags, H, 181, 'H');
barPanel(tags, W, 897, 'W');
tags.text(837, 907, 'Release Site', 28, '#000', 'middle');
tags.text(58, 464, 'Observed Tags', 28, '#000', 'middle', { transform: 'rotate(-90 58 464)' });
tags.text(459, 985, 'Release Year', 28, '#000', 'start');
[['2015', 'r'], ['2016', 'b'], ['2017', 'g'], ['2018', 'p'], ['2019', 'o']].forEach(([year, key], i) => {
  const x = 636 + i * 118.6;
  tags.rect(x + 2, 956, 39, 39, YEARS[key], '#000', 2.8);
  tags.text(x + 56, 984, year, 22, '#000', 'start');
});

/* daily window counts: "day:count", day 0 is April 1; a bare count is the next day */
const CHINOOK = '22:0 31:4 10 10 14 22 38 50 42 56 190 270 510 800 990 828 812 905 360 208 490 900 905 600 535 283 281 75 125 1085 452 520 385 322 475 560 487 535 1080 650 525 395 250 287 246 205 155 208 470 300 175 91 135 256 228 110 70 60 87 75 60 86 74 84 62 116 88 97 80 48 62 72 52 64 86 58 38 42 24 42 56 38 54 66 38 97 78 82 50 36 38 38 30 28 32 20 26 22 30 18 6 14 28 18 20 24 22 36 50 32 38 40 32 36 32 50 104 116 65 78 104 64 134 98 198 122 98 210 260 148 326 305 380 436 395 415 380 278 268 270 505 660 710 645 533 630 790 760 566 597 455 200 132 275 237 250 203 210 127 160 172 86 112 106 95 60 56 56 50 44 44 26 44 42 34 36 30 24 32 20 30 20 18 24 28 40 38 16 220:12 223:15 225:6 8 44 26 60 36 22 233:6 235:8 239:3 6 242:0 245:7 249:3 258:2';
const JACK = '-31:2 -21:-2 0:2 32:2 4 38:2 6 8 4 28 20 38 37 40 56 42 52 92 134 106 120 123 104 147 78 145 258 160 194 222 180 168 121 137 141 166 110 121 68 86 78 72 78 74 71 96 94 76 80 77 98 93 62 56 62 88 47 62 68 63 50 47 72 92 56 40 43 53 60 38 54 42 35 22 42 14 26 31 14 113:10 16 22 8 11 118:5 120:11 6 125:9 129:4 132:6 138:8 143:3 145:6 12 7 18 151:22 16 18 26 20 37 74 80 42 88 76 112 98 150 149 142 122 164 82 185 224 256 184 162 232 258 325 172 244 228 98 92 132 108 120 108 116 78 98 122 66 62 74 46 41 197:50 44 28 34 20 28 15 30 26 34 12 210:11 22 14 214:10 28 20 20 8 220:10 223:2 4 229:2 233:4 239:2 0 243:5 248:2';

const dayX = d => 315 + d * 4.32;

function areaPanel(p, data, top, label, fill) {
  const left = 120, width = 1372, height = 353, zero = top + 338, unit = 0.2973;
  p.strip(left, top - 42, width, label);
  for (let v = 150; v <= 1050; v += 300) p.line(left, zero - v * unit, left + width, zero - v * unit, GRID, 1.3);
  for (const d of [45.5, 137, 228.5]) p.line(dayX(d), top, dayX(d), top + height, GRID, 1.3);
  for (let v = 0; v <= 900; v += 300) {
    const y = zero - v * unit;
    p.line(left, y, left + width, y, GRID, 2.6);
    p.line(left - 7, y, left, y, INK, 2.6);
    p.text(left - 13, y + 8, v, 22, GREY, 'end');
  }
  for (const d of [0, 91, 183]) p.line(dayX(d), top, dayX(d), top + height, GRID, 2.6);
  let day = 0;
  const pts = data.split(' ').map(t => {
    const [a, b] = t.split(':');
    day = b === undefined ? day + 1 : +a;
    return [dayX(day), zero - (b === undefined ? a : b) * unit];
  });
  const line = 'M' + pts.map(q => q[0].toFixed(1) + ' ' + q[1].toFixed(1)).join('L');
  p.path(`${line}L${pts[pts.length - 1][0]} ${zero}L${pts[0][0]} ${zero}Z`, fill, 'none', 0);
  p.path(line, 'none', '#000', 2.7);
  p.rect(left, top, width, height, 'none', INK, 2);
}

const win = painter(document.getElementById('window'));
areaPanel(win, CHINOOK, 82, 'Chinook', '#a6cee3');
areaPanel(win, JACK, 493, 'Jack Chinook', '#1f78b4');
[['Apr', 0], ['Jul', 91], ['Oct', 183]].forEach(([m, d]) => {
  win.line(dayX(d), 846, dayX(d), 853, INK, 2.6);
  win.text(dayX(d), 875, m, 22, GREY, 'middle');
});
win.text(806, 907, 'Arrival Date', 27, '#000', 'middle');
win.text(58, 464, 'Window Count', 27, '#000', 'middle', { transform: 'rotate(-90 58 464)' });
[['Chinook', '#a6cee3', 643], ['Jack Chinook', '#1f78b4', 794]].forEach(([name, fill, x]) => {
  win.rect(x + 2, 956, 39, 39, fill, '#000', 2.8);
  win.text(x + 56, 984, name, 22, '#000', 'start');
});
```
